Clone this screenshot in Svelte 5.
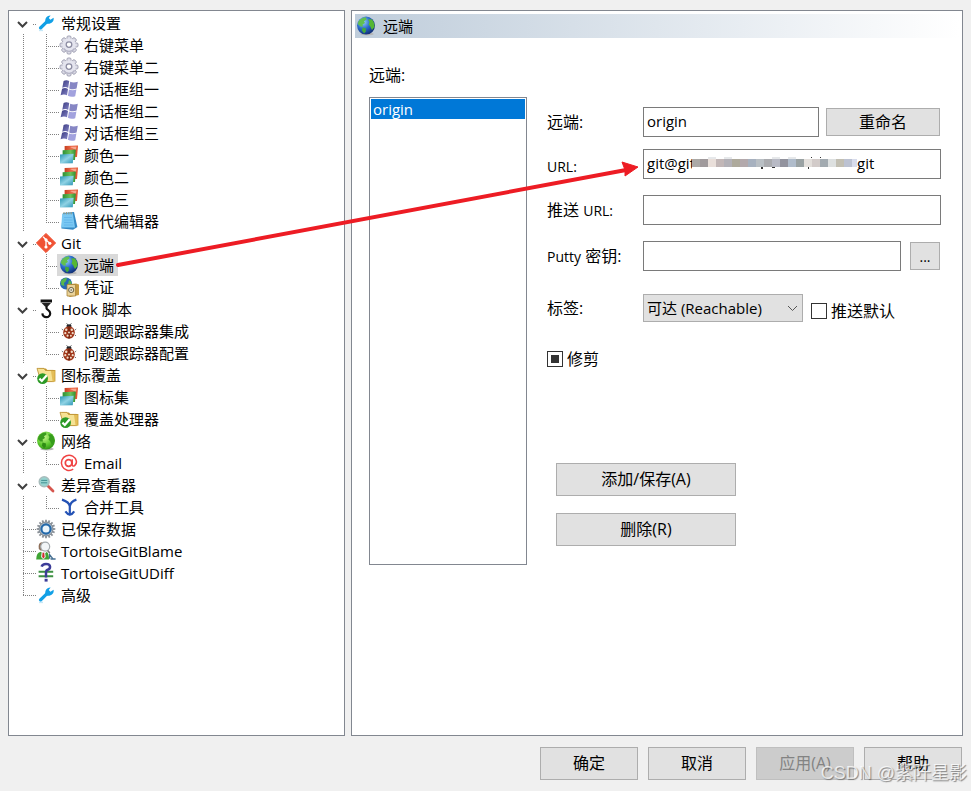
<script>
  const tree = [
    { label: '常规设置', icon: 'wrench', children: [
      ['右键菜单', 'gear'], ['右键菜单二', 'gear'],
      ['对话框组一', 'windows'], ['对话框组二', 'windows'], ['对话框组三', 'windows'],
      ['颜色一', 'layers'], ['颜色二', 'layers'], ['颜色三', 'layers'],
      ['替代编辑器', 'notepad']
    ] },
    { label: 'Git', icon: 'git', children: [['远端', 'globe'], ['凭证', 'credential']] },
    { label: 'Hook 脚本', icon: 'hook', children: [['问题跟踪器集成', 'bug'], ['问题跟踪器配置', 'bug']] },
    { label: '图标覆盖', icon: 'folder', children: [['图标集', 'layers'], ['覆盖处理器', 'folder']] },
    { label: '网络', icon: 'network', children: [['Email', 'at']] },
    { label: '差异查看器', icon: 'magnifier', children: [['合并工具', 'merge']] },
    { label: '已保存数据', icon: 'bluegear', children: [] },
    { label: 'TortoiseGitBlame', icon: 'blame', children: [] },
    { label: 'TortoiseGitUDiff', icon: 'udiff', children: [] },
    { label: '高级', icon: 'wrench', children: [] }
  ];
  const mosaic = ['#aba9a6', '#a09a9c', '#e9dfda', '#c2b7b7', '#b3b1b7', '#aeaa9c', '#b3a9ac', '#a7b1bf', '#b9bfc4', '#aaabaf', '#b8bac5', '#92939e', '#b0bccb', '#9aa2a3', '#e3dfdb', '#d2cbc9', '#a2aab0', '#dde0e0', '#c2bfb3', '#bcc2d2'];
  const teeth = [0, 45, 90, 135, 180, 225, 270, 315];

  let selected = $state('远端');
  let remote = $state('origin');
  let pushDefault = $state(false);
  let prune = $state(false);
  let pruneMixed = $state(true);
</script>

{#snippet icon(name)}
  <svg class="icon" viewBox="0 0 18 18" aria-hidden="true">
    {#if name === 'wrench'}
      <path d="M3.5 14 10 7.6" stroke="#12a0e6" stroke-width="3.2" stroke-linecap="round" />
      <path d="M9 9.5C7 5.2 9.4 1.2 13.6 1.4L11.8 3.9 13.4 5.8 16.6 3.8C17.4 8 13.4 10.8 9 9.5Z" fill="#12a0e6" />
      <path d="M2 16.4h4" stroke="#c5e8f8" stroke-width="1.5" />
    {:else if name === 'gear'}
      {#each teeth as a}
        <rect x="7" y="0" width="4" height="4.4" rx="1.2" fill="#dcdce6" stroke="#9a9aae" stroke-width=".9" transform="rotate({a} 9 9)" />
      {/each}
      <circle cx="9" cy="9" r="6.8" fill="#e4e4ee" />
      <path d="M3.6 12.4A6.6 6.6 0 0 0 14.6 12.4" fill="none" stroke="#b4b4c6" stroke-width="1.4" />
      <circle cx="9" cy="8.6" r="2.8" fill="#fff" stroke="#8c8ca2" stroke-width="1.3" />
    {:else if name === 'windows'}
      <defs><linearGradient id="flag" x2="1" y2="1"><stop stop-color="#3a3a80" /><stop offset="1" stop-color="#8484c6" /></linearGradient></defs>
      <path d="M3.6 1Q6.4-.6 9.2 1L8.2 7.9Q5.4 6.4 2.3 7.8Z" fill="url(#flag)" />
      <path d="M10.2 1.8Q13.4 3.4 17.8 1.8L16.6 8.6Q12.6 10 9.2 8.4Z" fill="#8686c4" />
      <path d="M2.1 8.8Q5.2 7.4 8 8.9L7 15.2Q4 13.6 .6 15.2Z" fill="url(#flag)" />
      <path d="M9 9.5Q12.4 11 16.4 9.6L15.2 16.2Q11.4 17.6 7.9 15.8Z" fill="#a2a2de" />
    {:else if name === 'layers'}
      <defs>
        <linearGradient id="red" x2="1"><stop stop-color="#c63f20" /><stop offset=".55" stop-color="#ee6c4c" /><stop offset="1" stop-color="#e0502a" /></linearGradient>
        <linearGradient id="green" x2="1"><stop stop-color="#2c8f35" /><stop offset=".6" stop-color="#6cc158" /><stop offset="1" stop-color="#2f8f33" /></linearGradient>
        <linearGradient id="teal" x2="1" y2="1"><stop stop-color="#2593b3" /><stop offset=".5" stop-color="#8fd2e4" /><stop offset="1" stop-color="#2993b4" /></linearGradient>
      </defs>
      <path d="M4.6 0 18-.6 17 11H4.6Z" fill="url(#red)" />
      <path d="M10 1 16.6.6 16 4Z" fill="#f8a58e" />
      <path d="M2.6 4.2 15.8 3.6 15 14H2.6Z" fill="url(#green)" />
      <path d="M0 8.4 13.6 7.8 12.8 17.2 0 17.6Z" fill="url(#teal)" />
    {:else if name === 'notepad'}
      <path d="M3 1 14 0 17.4 15 13 17.8 1.4 16.4Z" fill="#3489c4" />
      <path d="M2.2 1.8 12.8 1.2 15 15.6 1.2 15.4Z" fill="#79c8f3" />
      <path d="M4 5.5h8M4 8h8.5M4 10.5h8.6M4 13h9" stroke="#5fb2e8" stroke-width=".8" />
      <path d="M4 0v2.4M6.4 0v2.4M8.8 0v2.4M11.2 0v2.4" stroke="#9a9a80" />
    {:else if name === 'git'}
      <path d="M9-.6 18.6 9 9 18.6-.6 9Z" fill="#f05133" stroke="#f05133" stroke-linejoin="round" />
      <path d="M6.2 2.8 9 5.7v7.5M9 6l3.8 3.2" fill="none" stroke="#fff" stroke-width="1.3" />
      <circle cx="9" cy="5.8" r="1.6" fill="#fff" /><circle cx="9" cy="13" r="1.6" fill="#fff" /><circle cx="12.8" cy="9.3" r="1.6" fill="#fff" />
    {:else if name === 'globe' || name === 'network'}
      <defs>
        <radialGradient id="blue" cx=".35" cy=".3" r=".75"><stop stop-color="#9cd4f8" /><stop offset=".5" stop-color="#2b6ccc" /><stop offset="1" stop-color="#0f2b70" /></radialGradient>
        <radialGradient id="lime" cx=".4" cy=".3" r=".75"><stop stop-color="#c6f58a" /><stop offset=".6" stop-color="#5cc82e" /><stop offset="1" stop-color="#2a8c12" /></radialGradient>
      </defs>
      <ellipse cx="10" cy="17" rx="6.8" ry="1.5" fill="#b6b6b6" />
      <circle cx="9" cy="8.6" r="9" fill={name === 'globe' ? 'url(#blue)' : 'url(#lime)'} />
      <path d="M1.6 4.2Q5 0 9 .6L9.5 2.6 7 4.2 8 6 5.5 7.5 6 9.5 3.5 9.4.8 7Z" fill={name === 'globe' ? '#62c04f' : '#3a9c1e'} />
      <path d="M11 2.5 14.6 2.3Q18 6 17.4 10L15 13 13 9 11.5 7.5 12.5 5Z" fill={name === 'globe' ? '#55b733' : '#379c1c'} />
      <path d="M5.5 10.5 9 11.4 8.8 14.5 7 16.6 5 13.5Z" fill={name === 'globe' ? '#43a83c' : '#2f8c14'} />
    {:else if name === 'credential'}
      <circle cx="6" cy="5.6" r="6" fill="#2668b4" />
      <path d="M1 3Q4-.8 7 .2L6 3 4 5 4.4 8 1.3 7ZM9 2l2.5 2-.8 5L8 6Z" fill="#59b94a" />
      <path d="M7 6.2 16 5.5 19 6.5V17L10 19 7 17.5Z" fill="#c79b41" /><path d="M7 6.5h8.6V18H7Z" fill="#ead298" stroke="#9f782a" stroke-width=".7" />
      <circle cx="11.2" cy="12" r="2.6" fill="#e5e2d3" stroke="#6d6241" /><circle cx="11.2" cy="12" r=".8" fill="#6d6241" />
    {:else if name === 'hook'}
      <path d="M3.6-.5H15v3H3.6Z" fill="#111" /><path d="M4.6 3H14L10.8 6.4H8Z" fill="#222" />
      <path d="M9.5 6v2.2C9.5 10 13.2 10 13.2 13.2a3.9 3.9 0 0 1-7.8.2" fill="none" stroke="#111" stroke-width="2.2" />
    {:else if name === 'bug'}
      <path d="M6.5 1.2 8 3M11.5 1.2 10 3M3 8 1.8 7M15 8l1.2-1M3 13l-1 1M15 13l1 1" stroke="#777" />
      <ellipse cx="9" cy="4" rx="2.6" ry="1.8" fill="#22262c" />
      <ellipse cx="9" cy="10.5" rx="5.8" ry="6.2" fill="#9e3519" /><path d="M9 4.5v12" stroke="#5a1b0b" />
      <g fill="#f1dcc8"><circle cx="6.2" cy="7.8" r="1.2" /><circle cx="11.8" cy="7.8" r="1.2" /><circle cx="5.3" cy="11.2" r="1.1" /><circle cx="12.7" cy="11.2" r="1.1" /><circle cx="7.6" cy="13.7" r="1.1" /><circle cx="10.9" cy="13.7" r="1" /><circle cx="9" cy="10.4" r="1" /></g>
    {:else if name === 'folder'}
      <path d="M2 2.5H9L10.2 4H18.4V15.5H2Z" fill="#c89d34" /><path d="M0 2.4h7l1.5 2H16.4l.4 11.2H4Z" fill="#f6e294" stroke="#b78a2b" stroke-width=".8" />
      <path d="M14 5H17.6V15.4h-2Z" fill="#e4be58" />
      <circle cx="5.6" cy="12.6" r="5.4" fill="#2c9a26" /><path d="M2.4 12.6 4.8 15 9.8 9.2" fill="none" stroke="#fff" stroke-width="2.2" />
    {:else if name === 'at'}
      <circle cx="8.6" cy="9" r="3.3" fill="none" stroke="#f04343" stroke-width="1.7" />
      <path d="M12.2 5.2V10.8Q12.6 12.6 14.4 11.8 16.8 10 16.4 7.2A7.6 7.6 0 1 0 13.2 15.2" fill="none" stroke="#f04343" stroke-width="1.5" />
    {:else if name === 'magnifier'}
      <path d="M10.5 9.6 16 15" stroke="#d6564e" stroke-width="2.8" stroke-linecap="round" />
      <circle cx="7.2" cy="5.8" r="5" fill="#96d3cf" stroke="#a8bcbc" stroke-width="1.4" /><path d="M4.2 4.4h6M4 6.8h6.2" stroke="#418f92" />
    {:else if name === 'merge'}
      <path d="M2 1.6C4.5 2.4 9.2 4.6 9.8 8.2 10.4 4.6 14 2.4 16.4 1.6M9.8 7v9.8M5.4 13.4q2 2.8 4.4 3.4Q12.4 16.2 14.2 13.4" fill="none" stroke="#2452b5" stroke-width="2.2" />
    {:else if name === 'bluegear'}
      {#each [...teeth, 22, 67, 112, 157, 202, 247, 292, 337] as a}
        <path d="M8.1-.3h1.8V4H8.1Z" fill="#8a9097" transform="rotate({a} 9 9)" />
      {/each}
      <circle cx="9" cy="9" r="7" fill="#b7bfc7" stroke="#7d868f" /><circle cx="9" cy="9" r="4.6" fill="#eaf4fb" stroke="#2469aa" stroke-width="2.2" />
    {:else if name === 'blame'}
      <path d="M-.8 17.6Q-.8 10.4 4 9.8L7 12.2 9.6 10Q12 11 12 17.6Z" fill="#3fa534" /><path d="M4.6 10h3.4l.8 5-2.4 2.6L4 15Z" fill="#e9e9e9" /><path d="M5.6 10.8h1.5l.5 4-1.2 1.8-1.2-1.8Z" fill="#d32b2b" />
      <path d="M1.8 7Q.8.4 5 .2L8 1.5 7.5 8.5H3.5Z" fill="#8d6e58" /><circle cx="8.2" cy="4.6" r="4.5" fill="#f2f5f7" stroke="#a3a9ad" stroke-width="1.2" />
      <path d="M10.6 8.5 12.8 11" stroke="#777" stroke-width="1.6" /><path d="M12.6 16.8V12.6l3.4 4.2h2.4M13.6 17h5" fill="none" stroke="#456f91" stroke-width="1.3" />
    {:else if name === 'udiff'}
      <path d="M1.6 7.7h14.6M1.6 12.3h14.6" stroke="#3d9142" stroke-width="2" />
      <path d="M4.6 2.7Q5.4 0 9 0C14.4 0 14 5 10.2 6 9 6.4 9 8 9 9v4.6" fill="none" stroke="#3c3c98" stroke-width="2.5" /><rect x="7.6" y="14.8" width="3" height="2.8" fill="#3c3c98" />
    {/if}
  </svg>
{/snippet}

{#snippet dots(d)}
  <path {d} class="dots" />
{/snippet}

<main>
  <div class="panels">
    <nav class="panel tree" aria-label="设置">
      <ul>
        {#each tree as group, g}
          <li>
            <div class="row">
              {#if group.children.length}
                <button class="toggle" aria-label="展开 {group.label}">
                  <svg width="25" height="22" aria-hidden="true">
                    <path d="M9 10 13.5 14.5 18 10" fill="none" stroke="#404040" stroke-width="2" />
                    {@render dots('M24 12.5H28')}
                  </svg>
                </button>
              {:else}
                <svg class="guide" width="25" height="22" aria-hidden="true">
                  {@render dots(g === tree.length - 1 ? 'M14.5 0V11' : 'M14.5 0V22')}
                  {@render dots('M14 11.5H27')}
                </svg>
              {/if}
              <button class="item" class:selected={selected === group.label} onclick={() => (selected = group.label)}>
                {@render icon(group.icon)}{group.label}
              </button>
            </div>
            {#if group.children.length}
              <ul>
                {#each group.children as [label, name], i}
                  <li class="row">
                    <svg class="guide" width="48" height="22" aria-hidden="true">
                      {@render dots('M14.5 0V22')}
                      {@render dots(i === group.children.length - 1 ? 'M37.5 0V11' : 'M37.5 0V22')}
                      {@render dots('M37 12.5H50')}
                    </svg>
                    <button class="item" class:selected={selected === label} onclick={() => (selected = label)}>
                      {@render icon(name)}{label}
                    </button>
                  </li>
                {/each}
              </ul>
            {/if}
          </li>
        {/each}
      </ul>
    </nav>

    <section class="panel page">
      <h1>{@render icon('globe')}远端</h1>
      <div class="content">
        <div class="remotes">
          <h2 id="remotes-label">远端:</h2>
          <ul class="listbox" role="listbox" aria-labelledby="remotes-label">
            <li role="option" aria-selected="true">origin</li>
          </ul>
        </div>
        <form onsubmit={(e) => e.preventDefault()}>
          <div class="field">
            <label for="remote">远端:</label>
            <input id="remote" class="box" bind:value={remote} />
            <button class="btn rename" type="button">重命名</button>
          </div>
          <div class="field">
            <label for="url" class="latin">URL:</label>
            <div class="box url">
              <input id="url" value="git@git" />
              <svg width="165" height="18" aria-hidden="true">
                {#each mosaic as color, i}
                  <rect x={i * 8} y="5" width="8" height="8" fill={color} />
                {/each}
                <path d="M160 5h5v8h-5Z" fill="#d8dcec" />
                <path d="M16 3h8v2h-8ZM32 3h8v2h-8ZM80 3h8v2h-8ZM96 3h8v2h-8Z" fill="#e6e8ea" />
                <path d="M69 13h2v2h-2ZM80 13h3v1h-3ZM116 13h1v2h-1ZM119 3h1v1h-1ZM128 3h1v1h-1Z" fill="#333" />
              </svg>
              <span>git</span>
            </div>
          </div>
          <div class="field">
            <label for="push">推送 <span class="latin">URL:</span></label>
            <input id="push" class="box" />
          </div>
          <div class="field">
            <label for="putty"><span class="latin">Putty</span> 密钥:</label>
            <input id="putty" class="box" />
            <button class="btn browse" type="button" aria-label="浏览">...</button>
          </div>
          <div class="field tags">
            <label for="tags">标签:</label>
            <div class="combo">
              <select id="tags"><option>可达 (Reachable)</option></select>
              <svg width="11" height="7" aria-hidden="true"><path d="M1 1 5.5 5.5 10 1" fill="none" stroke="#555" /></svg>
            </div>
            <label class="check"><input type="checkbox" bind:checked={pushDefault} />推送默认</label>
          </div>
          <label class="check prune"><input type="checkbox" bind:checked={prune} bind:indeterminate={pruneMixed} />修剪</label>
          <div class="actions">
            <button class="btn" type="button">添加/保存(A)</button>
            <button class="btn" type="button">删除(R)</button>
          </div>
        </form>
      </div>
    </section>
  </div>

  <footer>
    <button class="btn">确定</button>
    <button class="btn">取消</button>
    <button class="btn" disabled>应用(A)</button>
    <button class="btn">帮助</button>
  </footer>

  <svg class="arrow" width="640" height="280" aria-hidden="true">
    <path d="M118 265 626 170" stroke="#ed1c24" stroke-width="4" stroke-linecap="round" />
    <path d="M638 167 622 162 625 170 625 176Z" fill="#ed1c24" stroke="#ed1c24" />
  </svg>
  <div class="watermark">CSDN @紫阡星影</div>
</main>

<style>
  :global(body) { margin: 0; background: #f0f0f0; }
  main, button, input, select {
    font-family: "Open Sans", "Noto Sans CJK SC", sans-serif;
    font-size: 15px;
    color: #000;
  }
  main {
    position: relative;
    box-sizing: border-box;
    min-height: 100vh;
    padding: 10px 8px 11px;
    display: flex;
    flex-direction: column;
    gap: 11px;
    overflow: hidden;
  }
  ul { list-style: none; margin: 0; padding: 0; }
  button { margin: 0; }
  .panels { flex: 1; display: flex; gap: 6px; }
  .panel { box-sizing: border-box; min-width: 0; background: #fff; border: 1px solid #828790; }
  .tree { flex: 335 1 0; padding-top: 1px; }
  .page { flex: 604 1 0; padding: 3px; display: flex; flex-direction: column; }

  .row { display: flex; height: 22px; }
  .guide { flex: none; overflow: visible; }
  .toggle { border: 0; padding: 0; background: none; width: 25px; height: 22px; }
  .toggle svg { display: block; overflow: visible; }
  .dots { fill: none; stroke: #808080; stroke-dasharray: 1 1; shape-rendering: crispEdges; }
  .item {
    display: flex;
    align-items: center;
    gap: 6px;
    height: 22px;
    padding: 0 4px 0 3px;
    border: 0;
    background: none;
    line-height: 22px;
    white-space: nowrap;
  }
  .item.selected { background: #d9d9d9; }
  .icon { flex: none; width: 18px; height: 18px; overflow: visible; fill: none; }

  h1 {
    display: flex;
    align-items: center;
    gap: 8px;
    height: 24px;
    margin: 0;
    padding-left: 2px;
    font-size: 15px;
    font-weight: 400;
    line-height: 22px;
    background: linear-gradient(90deg, #bfcddb, #fff);
  }
  h2 { margin: 0; font-size: 16px; font-weight: 400; line-height: 24px; }
  .content { display: flex; gap: 20px; padding: 25px 18px 0 14px; }
  .remotes { flex: none; width: 158px; display: flex; flex-direction: column; gap: 10px; }
  .listbox { box-sizing: border-box; height: 468px; padding: 1px; border: 1px solid #828790; }
  .listbox li { height: 20px; padding-left: 2px; line-height: 20px; background: #0078d7; color: #fff; }

  form { flex: 1; min-width: 0; padding-top: 44px; display: flex; flex-direction: column; gap: 16px; }
  .field { display: flex; align-items: center; height: 30px; }
  .field > label:first-child { flex: none; width: 96px; }
  .field:nth-child(2) { margin-top: -4px; }
  .field:nth-child(2) > label { padding-top: 6px; }
  label { font-size: 16px; line-height: 24px; }
  .latin, label.latin { font-size: 14px; }
  .box {
    flex: 1;
    min-width: 0;
    box-sizing: border-box;
    height: 30px;
    padding: 0 3px 3px;
    border: 1px solid #7a7a7a;
    border-radius: 0;
    background: #fff;
  }
  .url { display: flex; align-items: center; }
  .url input { width: 45px; padding: 0; border: 0; background: none; outline: 0; }
  .url svg { flex: none; }
  .btn {
    box-sizing: border-box;
    height: 33px;
    padding: 0 0 3px;
    border: 1px solid #adadad;
    background: #e1e1e1;
    font-size: 16px;
  }
  .btn:disabled { background: #ccc; border-color: #bfbfbf; color: #838383; }
  .rename { width: 114px; height: 28px; margin: 0 1px 0 7px; }
  .browse { width: 30px; height: 28px; margin: 0 1px 0 9px; font-size: 14px; padding: 0; }
  .tags { margin-top: 6px; }
  .combo { position: relative; }
  .combo select {
    appearance: none;
    display: block;
    width: 160px;
    height: 28px;
    padding: 0 24px 0 3px;
    border: 1px solid #adadad;
    border-radius: 0;
    background: #e1e1e1;
  }
  .combo svg { position: absolute; right: 5px; top: 11px; pointer-events: none; }
  .check { display: flex; align-items: center; gap: 4px; }
  .tags .check { padding: 6px 0 0 8px; }
  .check input {
    appearance: none;
    box-sizing: border-box;
    width: 16px;
    height: 16px;
    margin: 0;
    padding: 3px;
    border: 1px solid #333;
    background: #fff content-box;
  }
  .check input:indeterminate, .check input:checked { background-color: #333; box-shadow: inset 0 0 0 3px #fff; }
  .prune { margin-top: 8px; }
  .actions { display: flex; flex-direction: column; gap: 17px; width: 180px; margin: 76px 0 0 9px; }

  footer { display: flex; justify-content: flex-end; gap: 10px; padding-right: 1px; }
  footer .btn { width: 98px; }
  .arrow { position: absolute; left: 0; top: 0; pointer-events: none; }
  .watermark {
    position: absolute;
    right: 4px;
    bottom: 5px;
    font: 18px/26px "Liberation Sans", "Noto Sans CJK SC", sans-serif;
    color: rgba(255, 255, 255, .75);
    text-shadow: 1px 1px 1px rgba(90, 90, 90, .7);
    pointer-events: none;
  }
</style>
